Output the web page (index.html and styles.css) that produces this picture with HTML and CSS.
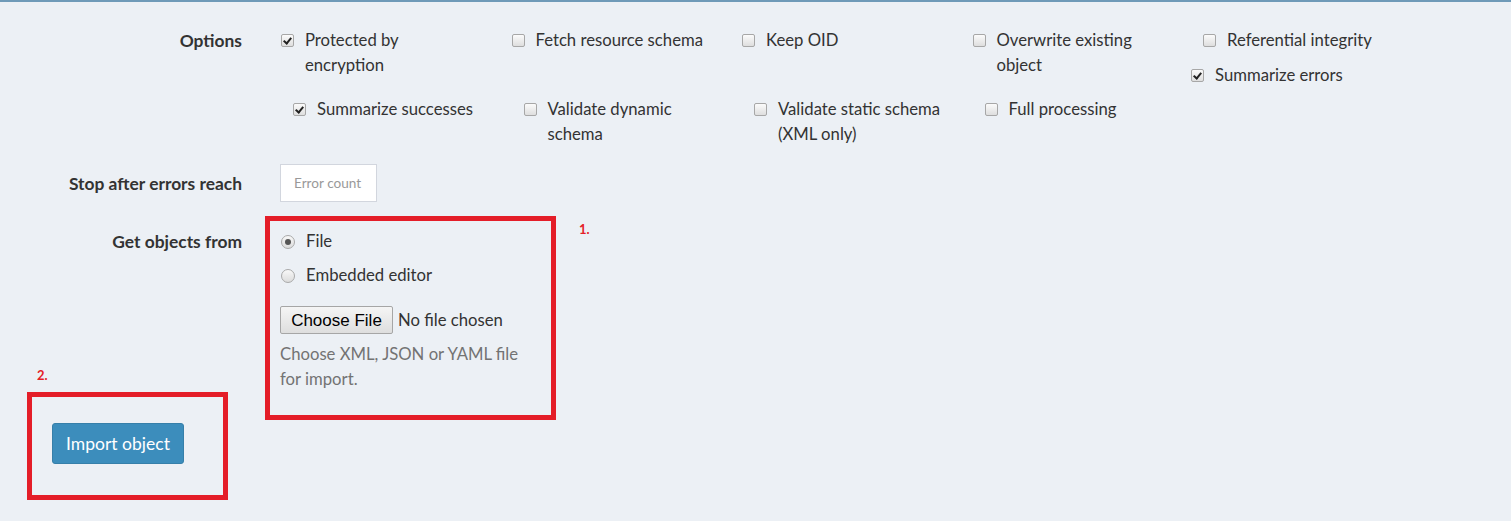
FILE: index.html
```html
<!DOCTYPE html>
<html lang="en">
<head>
<meta charset="utf-8">
<title>Import object</title>
<link rel="stylesheet" href="styles.css">
</head>
<body>
<main class="page">
  <form class="import-form">
    <div class="form-row row-options">
      <div class="row-label">Options</div>
      <div class="options">
        <div class="opt-line">
          <div class="opt-col">
            <label class="check"><span class="box checked"></span><span class="txt">Protected by encryption</span></label>
          </div>
          <div class="opt-col">
            <label class="check"><span class="box"></span><span class="txt">Fetch resource schema</span></label>
          </div>
          <div class="opt-col">
            <label class="check"><span class="box"></span><span class="txt">Keep OID</span></label>
          </div>
          <div class="opt-col">
            <label class="check"><span class="box"></span><span class="txt">Overwrite existing object</span></label>
          </div>
          <div class="opt-col col-last">
            <label class="check"><span class="box"></span><span class="txt">Referential integrity</span></label>
            <label class="check pull-left"><span class="box checked"></span><span class="txt">Summarize errors</span></label>
          </div>
        </div>
        <div class="opt-line opt-line-2">
          <div class="opt-col">
            <label class="check"><span class="box checked"></span><span class="txt">Summarize successes</span></label>
          </div>
          <div class="opt-col">
            <label class="check"><span class="box"></span><span class="txt">Validate dynamic schema</span></label>
          </div>
          <div class="opt-col">
            <label class="check"><span class="box"></span><span class="txt">Validate static schema (XML only)</span></label>
          </div>
          <div class="opt-col">
            <label class="check"><span class="box"></span><span class="txt">Full processing</span></label>
          </div>
        </div>
      </div>
    </div>

    <div class="form-row row-stop">
      <div class="row-label">Stop after errors reach</div>
      <div class="control">
        <input class="text-input" type="text" placeholder="Error count">
      </div>
    </div>

    <div class="form-row row-source">
      <div class="row-label">Get objects from</div>
      <div class="control">
        <label class="radio"><span class="dot checked"></span><span class="txt">File</span></label>
        <label class="radio"><span class="dot"></span><span class="txt">Embedded editor</span></label>
        <div class="file-line">
          <span class="file-btn">Choose File</span>
          <span class="file-name">No file chosen</span>
        </div>
        <p class="help">Choose XML, JSON or YAML file for import.</p>
      </div>
    </div>

    <div class="form-footer">
      <button type="button" class="btn-primary">Import object</button>
    </div>
  </form>

  <div class="mark mark-1"></div>
  <div class="mark-num num-1">1.</div>
  <div class="mark mark-2"></div>
  <div class="mark-num num-2">2.</div>
</main>
</body>
</html>
```

FILE: styles.css
```css
* { box-sizing: border-box; }

html, body {
  margin: 0;
  padding: 0;
}

body {
  background: #ecf0f5;
  border-top: 2px solid #6f9ab8;
  font-family: "Lato", "Liberation Sans", sans-serif;
  font-size: 16.7px;
  color: #333;
  height: 521px;
  overflow: hidden;
}

.page {
  position: relative;
  height: 519px;
}

.import-form {
  padding-top: 26px;
}

.form-row {
  display: grid;
  grid-template-columns: 242px 1fr;
  column-gap: 38px;
  line-height: 25px;
}

.row-label {
  text-align: right;
  font-weight: bold;
  font-size: 17.4px;
  white-space: nowrap;
}

/* options */
.opt-line {
  display: grid;
  grid-template-columns: repeat(5, 230.5px);
  padding-left: 1px;
}

.opt-line-2 {
  margin-top: 9px;
  padding-left: 13px;
}

.opt-col {
  display: flex;
  flex-direction: column;
  gap: 10px;
}

.check, .radio {
  display: flex;
  align-items: flex-start;
  gap: 11px;
}

.check .txt {
  max-width: 170px;
}

.pull-left {
  margin-left: -12px;
}

.box {
  flex: none;
  width: 13px;
  height: 13px;
  margin-top: 6px;
  border: 1px solid #a7a7a7;
  border-radius: 2px;
  background: linear-gradient(#fbfbfb, #dedede);
  position: relative;
}

.box.checked::after {
  content: "";
  position: absolute;
  left: 3px;
  top: 1px;
  width: 3px;
  height: 6px;
  border: solid #222;
  border-width: 0 2px 2px 0;
  transform: rotate(40deg);
}

/* stop row */
.row-stop {
  margin-top: 17px;
  align-items: center;
}

.text-input {
  width: 97px;
  height: 38px;
  border: 1px solid #d2d6de;
  background: #fff;
  padding: 0 13px;
  font-family: "Lato", "Liberation Sans", sans-serif;
  font-size: 13.6px;
  color: #555;
  outline: none;
}

.text-input::placeholder {
  color: #999;
}

/* source row */
.row-source {
  margin-top: 27px;
}

.radio {
  margin-left: 1px;
  margin-bottom: 9px;
}

.radio + .radio {
  margin-top: 2px;
}

.dot {
  flex: none;
  width: 14px;
  height: 14px;
  margin-top: 5.5px;
  border: 1px solid #a9a9a9;
  border-radius: 50%;
  background: linear-gradient(#f8f8f8, #dcdcdc);
  position: relative;
}

.dot.checked::after {
  content: "";
  position: absolute;
  left: 3px;
  top: 3px;
  width: 6px;
  height: 6px;
  border-radius: 50%;
  background: #555;
}

.file-line {
  display: flex;
  align-items: center;
  gap: 5px;
  margin-top: 18px;
}

.file-btn {
  display: inline-flex;
  align-items: center;
  justify-content: center;
  width: 113px;
  height: 28px;
  border: 1px solid #a6a6a6;
  border-radius: 2px;
  background: linear-gradient(#f5f5f5, #dedede);
  font-family: "Liberation Sans", Arial, sans-serif;
  font-size: 17px;
  color: #000;
}

.file-name {
  color: #333;
}

.help {
  margin: 8px 0 0;
  width: 245px;
  color: #737373;
}

/* footer */
.form-footer {
  padding-left: 52px;
  margin-top: 31px;
}

.btn-primary {
  width: 132px;
  height: 41px;
  border: 1px solid #367fa9;
  border-radius: 3px;
  background: #3c8dbc;
  color: #fff;
  font-family: "Lato", "Liberation Sans", sans-serif;
  font-size: 17.5px;
  padding: 0;
}

/* annotation overlays */
.mark {
  position: absolute;
  border: 5px solid #e41d28;
}

.mark-1 {
  left: 265px;
  top: 214px;
  width: 291px;
  height: 204px;
}

.mark-2 {
  left: 27px;
  top: 390px;
  width: 201px;
  height: 108px;
}

.mark-num {
  position: absolute;
  color: #e41d28;
  font-weight: bold;
  font-size: 13px;
  line-height: 14px;
}

.num-1 {
  left: 579px;
  top: 220px;
}

.num-2 {
  left: 37px;
  top: 366px;
}
```
